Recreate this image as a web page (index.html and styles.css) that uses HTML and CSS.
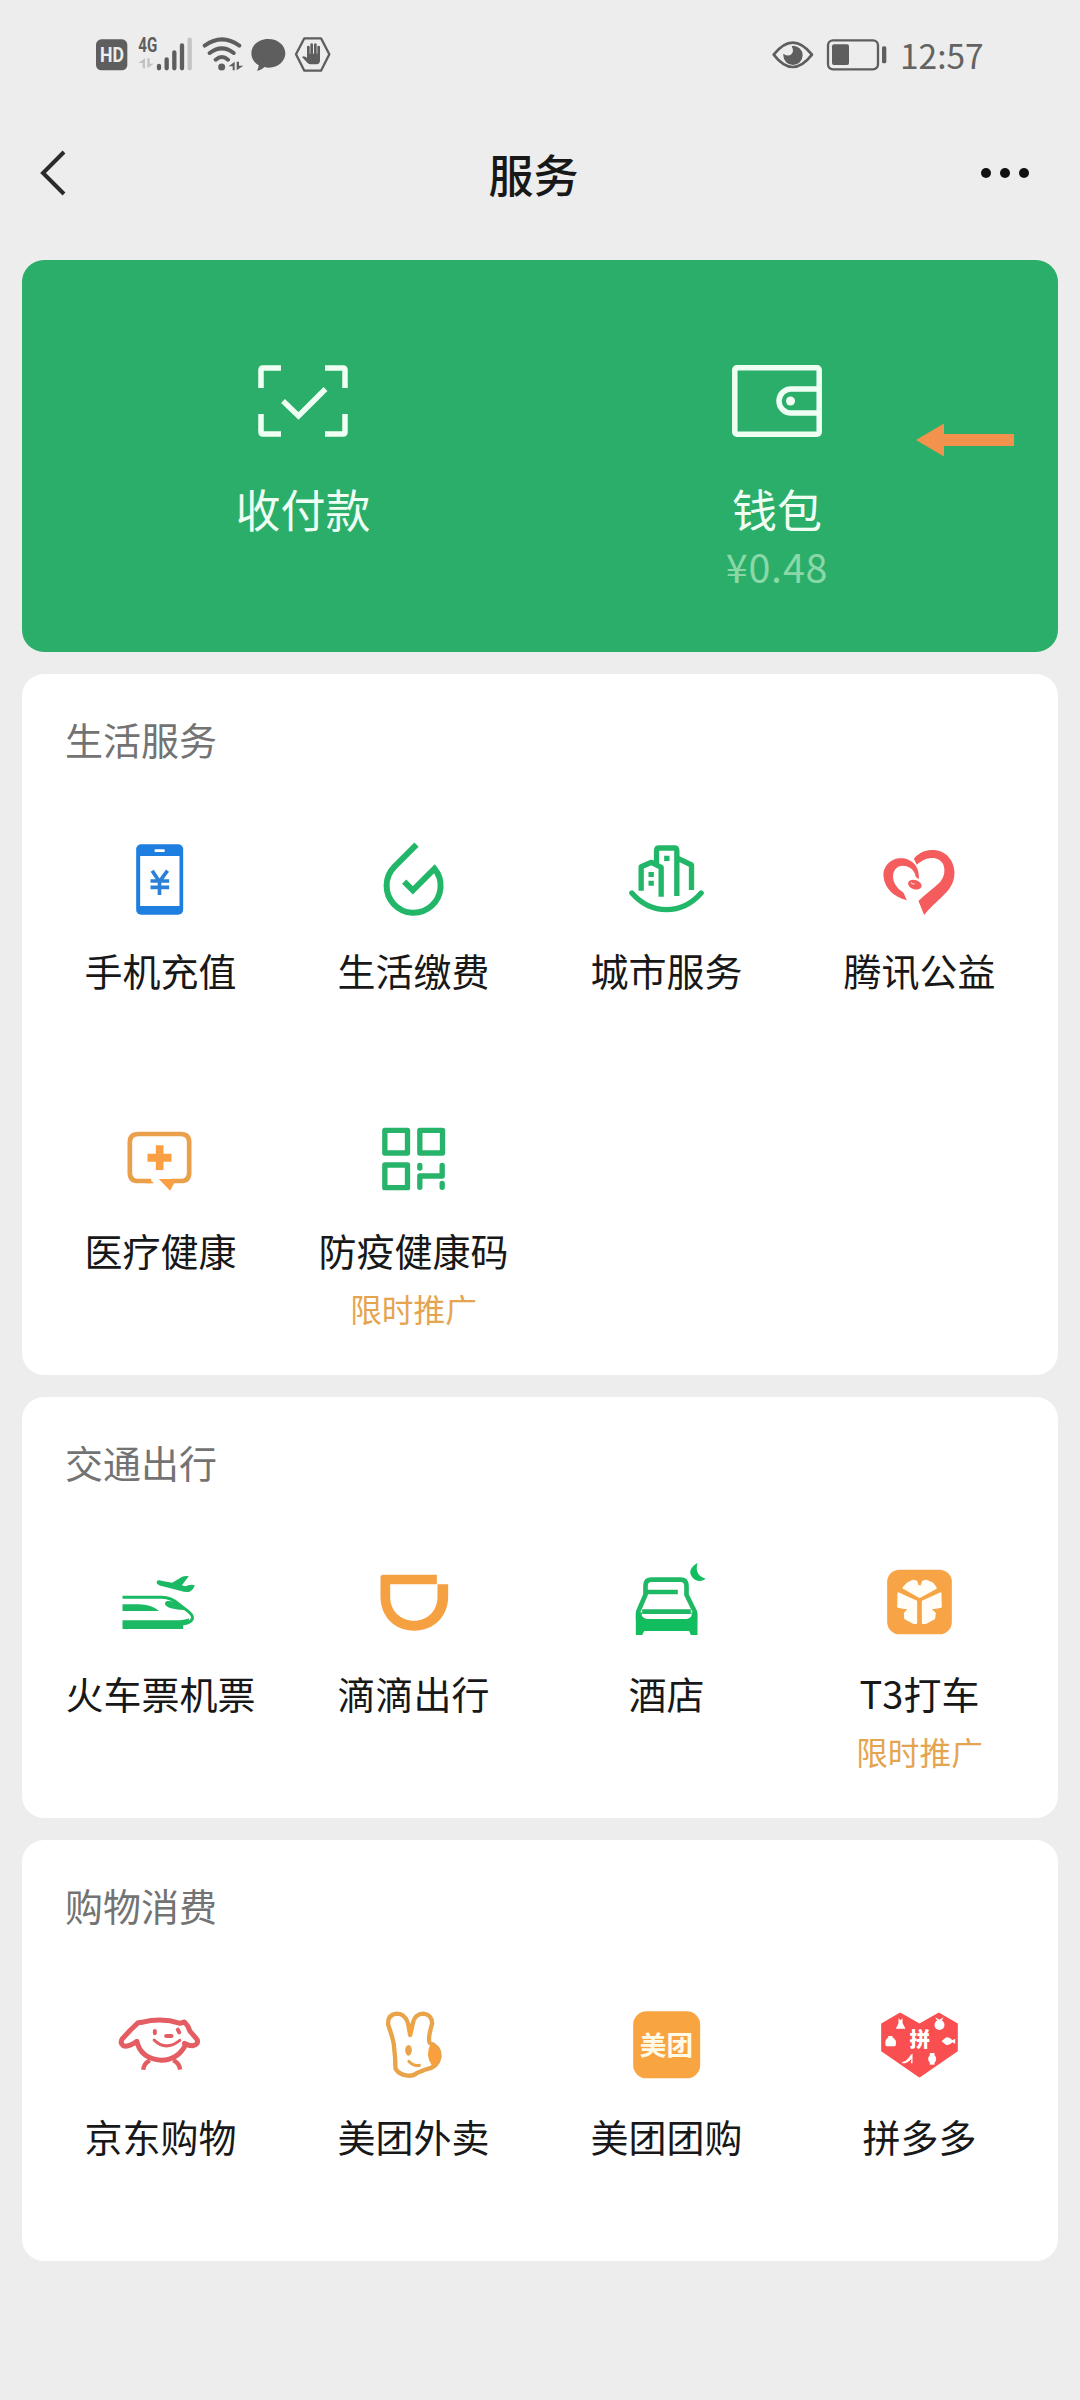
FILE: index.html
```html
<!DOCTYPE html>
<html lang="zh-CN">
<head>
<meta charset="utf-8">
<title>服务</title>
<link rel="stylesheet" href="styles.css">
</head>
<body>
<header class="status">
  <div class="status-group">
    <svg width="34.67" height="35" viewBox="44 50 104 105">
      <rect x="47" y="57" width="94" height="93" rx="16" fill="#5e5e5e"/>
      <text class="hd" x="95" y="126" text-anchor="middle" textLength="72" lengthAdjust="spacingAndGlyphs">HD</text>
    </svg>
    <svg width="59.33" height="51" viewBox="166 26 178 153">
      <text class="net" x="176" y="95" textLength="57" lengthAdjust="spacingAndGlyphs">4G</text>
      <path d="M196 114v30h-7v-16h-13zM203 114v30l19-14h-12v-16z" fill="#c2c2c2"/>
      <g stroke="#5e5e5e" stroke-width="13" stroke-linecap="round"><path d="M238 137v7M261 117v27M284 96v48M307 75v69"/><path d="M330 58v86" stroke="#c4c4c4"/></g>
    </svg>
    <svg width="44" height="35" viewBox="362 50 132 105">
      <g fill="none" stroke="#5e5e5e" stroke-width="12" stroke-linecap="round"><path d="M373 76Q425 38 477 76M388 98Q425 70 460 98M406 118Q425 102 443 118"/></g>
      <circle cx="424" cy="140" r="10.500" fill="#5e5e5e"/>
      <path d="M463 124v26h-6v-12h-12zM469 124v26l20-14h-13v-12z" fill="#5e5e5e"/>
    </svg>
    <svg width="36" height="35" viewBox="512 50 108 105">
      <path d="M564 56c29 0 51 19 51 43s-22 43-49 43c-5 0-10-1-14-2-6 6-13 11-22 11 3-5 5-10 5-16-14-8-22-21-22-36 0-24 22-43 51-43z" fill="#5e5e5e"/>
    </svg>
    <svg width="38" height="35" viewBox="638 50 114 105">
      <path d="M672 54h50l25 48-25 49h-50l-25-49z" fill="none" stroke="#5e5e5e" stroke-width="7" stroke-linejoin="round"/>
      <path d="M684 118V80M694 116V73M705 116V73M715 118V80" stroke="#5e5e5e" stroke-width="8" stroke-linecap="round"/>
      <path d="M680 100h39v20q0 12-11 12h-16q-7 0-11-5l-16-17q5-6 15 2z" fill="#5e5e5e"/>
    </svg>
  </div>
  <div class="status-group">
    <svg width="43.33" height="35" viewBox="65 50 130 105">
      <path d="M73 103Q130 31 188 103Q130 177 73 103z" fill="none" stroke="#5e5e5e" stroke-width="8" stroke-linejoin="round"/>
      <path d="M131 76a29 29 0 1 1-29 29v-5q14 10 24 2 9-9 1-24z" fill="#5e5e5e"/>
    </svg>
    <svg width="66.33" height="35" viewBox="213 50 199 105">
      <rect x="234" y="60" width="150" height="87" rx="15" fill="none" stroke="#5e5e5e" stroke-width="7"/>
      <rect x="246" y="72" width="51" height="62" rx="6" fill="#5e5e5e"/><rect x="396" y="78" width="13" height="51" rx="5" fill="#5e5e5e"/>
    </svg>
    <span class="clock">12:57</span>
  </div>
</header>

<nav class="nav">
  <svg width="48" height="60" viewBox="0 0 48 60"><path d="M34 9L13 30L34 51" fill="none" stroke="#2b2b2b" stroke-width="4"/></svg>
  <h1 class="nav-title">服务</h1>
  <svg width="60" height="20" viewBox="0 0 60 20" fill="#111"><circle cx="11" cy="10" r="5"/><circle cx="30" cy="10" r="5"/><circle cx="49" cy="10" r="5"/></svg>
</nav>

<main class="cards">
  <section class="pay">
    <div class="pay-item">
      <svg width="90" height="72" viewBox="0 0 90 72" fill="none" stroke="#effff4" stroke-width="5.500">
        <path d="M3 23V5q0-2 2-2H23M67 3H85q2 0 2 2V23M87 49V67q0 2-2 2H67M23 69H5q-2 0-2-2V49M25 36L40.500 51L67.500 24"/>
      </svg>
      <span class="pay-label">收付款</span>
    </div>
    <div class="pay-item">
      <svg width="90" height="72" viewBox="0 0 90 72" fill="none" stroke="#effff4" stroke-width="5.500">
        <rect x="2.800" y="2.800" width="84.400" height="66.400" rx="2"/><path d="M87 24H59a12 12 0 0 0 0 24H87"/><circle cx="58.500" cy="36" r="4.500" fill="#effff4" stroke="none"/>
      </svg>
      <span class="pay-label">钱包</span>
      <span class="pay-sub">¥0.48</span>
    </div>
    <svg class="arrow" width="98" height="34" viewBox="0 0 98 34"><path d="M0 17L28 0.500V11H98V23H28V33.500z" fill="#f3924d"/></svg>
  </section>

  <section class="card">
    <h2 class="card-title">生活服务</h2>
    <div class="grid">
      <div class="item">
        <svg class="icon" viewBox="157.500 396 288 288">
          <rect x="230" y="433" width="141" height="211" rx="15" fill="#1e7fe0"/><path d="M242 468H360V618H242z" fill="#fff"/><rect x="285" y="448" width="31" height="8" rx="3" fill="#fff"/>
          <path d="M278 512L300 545L324 512M273 543H329M273 562H329M300 543V585" fill="none" stroke="#2a80d6" stroke-width="11"/>
        </svg>
        <span class="label">手机充值</span>
      </div>
      <div class="item">
        <svg class="icon" viewBox="916.500 396 288 288"><path d="M1071 434L1005 500A81 81 0 1 0 1125 506L1060 571L1034 545" fill="none" stroke="#22b668" stroke-width="18"/></svg>
        <span class="label">生活缴费</span>
      </div>
      <div class="item">
        <svg class="icon" viewBox="115.500 36 288 288">
          <g fill="none" stroke="#22b668" stroke-width="16"><path d="M157 219Q201 269 261 269T365 219" stroke-linecap="round"/><path d="M185 212V140L216 127L245 142V230M231 132V92Q231 84 239 84H284Q292 84 292 92V228M297 116L336 135V210" stroke-linejoin="round"/></g>
          <path d="M254 107h16v16h-16zM207 156h16v15h-16zM207 182h16v15h-16z" fill="#22b668"/>
        </svg>
        <span class="label">城市服务</span>
      </div>
      <div class="item">
        <svg class="icon" viewBox="874.500 36 288 288">
          <g fill="#f55c5e"><path d="M1003 116C1025 90 1052 88 1070 91C1105 97 1124 126 1125 157C1125 194 1106 213 1084 234C1066 251 1050 264 1034 285L1017 243C1034 225 1060 207 1079 189C1094 174 1099 153 1091 133C1081 111 1046 104 1012 134z"/>
          <path d="M1018 178C1022 135 991 111 957 115C929 119 909 143 912 170C917 207 942 229 982 241L972 218C951 205 938 185 941 163C945 142 962 133 981 139C996 144 1006 154 1009 171z"/><ellipse cx="1006" cy="194" rx="21" ry="14" transform="rotate(18 1006 194)"/></g>
          <path d="M994 188q5 5 11 4" stroke="#fff" stroke-width="3" fill="none"/>
        </svg>
        <span class="label">腾讯公益</span>
      </div>
      <div class="item">
        <svg class="icon" viewBox="157.500 36 288 288">
          <path d="M275 243H236Q211 243 211 218V127Q211 102 236 102H364Q389 102 389 127V218Q389 243 364 243H335" fill="none" stroke="#eaa04a" stroke-width="14"/><path d="M268 236L284 250H260zM298 237H350L332 272zM289 136h23v25h24v24h-24v25h-23v-25h-25v-24h25z" fill="#fa9f43"/>
        </svg>
        <span class="label">医疗健康</span>
      </div>
      <div class="item">
        <svg class="icon" viewBox="916.500 36 288 288">
          <g fill="none" stroke="#28b36b" stroke-width="16" stroke-linejoin="round"><path d="M976 91h68v68h-68zM1081 91h68v68h-68zM976 195h68v68h-68z"/><path d="M1081 262V228H1148V196M1081 196V204M1148 250V262" stroke-linecap="round"/></g>
        </svg>
        <span class="label">防疫健康码</span><span class="promo">限时推广</span>
      </div>
    </div>
  </section>

  <section class="card">
    <h2 class="card-title">交通出行</h2>
    <div class="grid">
      <div class="item">
        <svg class="icon" viewBox="157.500 375 288 288" fill="#1bb964">
          <path d="M189 571H347Q374 571 389 565Q388 583 371 585V597H189zM189 523H238Q276 524 299 543H189zM322 513Q344 511 364 526L377 540Q340 539 326 532Q308 521 322 513z"/>
          <path d="M189 502H306Q337 503 360 524L386 544Q412 565 386 578Q375 583 352 583" fill="none" stroke="#1bb964" stroke-width="9"/>
          <path d="M293 452Q298 449 309 453L338 458L368 440Q378 436 388 439L367 466Q378 471 386 466Q395 462 406 466Q400 482 390 485Q379 488 362 482L303 467Q287 461 293 452z"/>
        </svg>
        <span class="label">火车票机票</span>
      </div>
      <div class="item">
        <svg class="icon" viewBox="916.500 375 288 288"><path fill-rule="evenodd" d="M971 434H1132V463H1166V500C1166 560 1121 602 1064 602C1007 602 963 560 963 500V442Q963 434 971 434zM992 463V500C992 543 1024 572 1064 572C1103 572 1134 543 1134 500V463z" fill="#f5a041"/></svg>
        <span class="label">滴滴出行</span>
      </div>
      <div class="item">
        <svg class="icon" viewBox="115.500 45 288 288">
          <path d="M176 240V215L198 164V137Q198 119 216 119H303Q321 119 321 137V164L346 215V240M203 156H295M188 215H334" fill="none" stroke="#1fb966" stroke-width="14"/>
          <path d="M169 220L188 217Q182 232 202 237H322Q341 232 335 217L354 220V285H334L329 273H194L188 285H169zM354 69Q344 106 379 116Q360 129 343 117Q317 91 354 69z" fill="#12bd60"/>
        </svg>
        <span class="label">酒店</span>
      </div>
      <div class="item">
        <svg class="icon" viewBox="874.500 45 288 288">
          <rect x="923" y="89" width="194" height="194" rx="37" fill="#f6a445"/>
          <g fill="#fffdf5" stroke="#fffdf5" stroke-width="6" stroke-linejoin="round">
            <path d="M1020 171L972 144L984 130L1001 122L1011 125L1015 139H1026L1030 125L1040 122L1059 130L1069 144z"/>
            <path d="M1010 184L957 160L956 200L975 204L981 202L986 209L976 220L977 235L1002 249H1010zM1030 184L1083 160L1084 200L1065 204L1059 202L1054 209L1066 220L1064 235L1038 249H1030z"/>
          </g>
        </svg>
        <span class="label">T3打车</span><span class="promo">限时推广</span>
      </div>
    </div>
  </section>

  <section class="card">
    <h2 class="card-title">购物消费</h2>
    <div class="grid">
      <div class="item">
        <svg class="icon" viewBox="157.500 384 288 288" fill="none" stroke="#e35d63" stroke-linecap="round" stroke-linejoin="round">
          <path d="M247 457Q306 442 362 460L375 456Q386 466 391 483L413 509Q418 522 401 527Q386 527 375 520M247 457L236 458L213 480L188 507Q181 519 191 527Q206 533 232 514Q243 566 306 571Q356 569 379 523" stroke-width="15"/>
          <path d="M284 510Q318 545 361 511" stroke-width="9"/><path d="M286 483V490M355 479L359 487M320 498H336" stroke-width="12"/><path d="M271 571Q253 580 251 599M341 571Q359 579 362 599" stroke-width="13" stroke-linecap="butt"/>
        </svg>
        <span class="label">京东购物</span>
      </div>
      <div class="item">
        <svg class="icon" viewBox="916.500 384 288 288" fill="none" stroke="#e9a449" stroke-linecap="round" stroke-linejoin="round">
          <path d="M1004 535Q1004 515 986 464Q983 434 1012 431Q1038 431 1046 462L1052 495L1061 456Q1067 432 1092 431Q1117 434 1118 461Q1105 502 1110 518Q1142 530 1140 561Q1134 592 1100 598L1072 609Q1060 619 1044 617Q1018 614 1008 596Q1008 565 1004 535z" stroke-width="13"/>
          <path d="M1114 526Q1140 534 1138 562Q1134 581 1119 584Q1100 556 1114 526zM1046 470H1060L1053 497z" fill="#f99f3e" stroke="#f99f3e" stroke-width="5"/><ellipse cx="1047" cy="541" rx="10" ry="16" fill="#e9a449" stroke="none"/><path d="M1048 574Q1062 590 1080 586" stroke-width="9"/>
        </svg>
        <span class="label">美团外卖</span>
      </div>
      <div class="item">
        <svg class="icon" viewBox="115.500 54 288 288"><rect x="161" y="94" width="201" height="201" rx="40" fill="#f8a541"/><text class="mt-logo" x="261" y="226" text-anchor="middle">美团</text></svg>
        <span class="label">美团团购</span>
      </div>
      <div class="item">
        <svg class="icon" viewBox="874.500 54 288 288">
          <path d="M962 101L1020 134L1078 101L1132 132V212L1020 289L908 212V132z" fill="#f94f51" stroke="#f94f51" stroke-width="6" stroke-linejoin="round"/>
          <text class="pdd-logo" x="1021" y="200" text-anchor="middle">拼</text>
          <g fill="#fff"><path d="M957 115L963 121L969 115V129L978 146H949L957 130z"/><circle cx="1080" cy="135" r="15"/><path d="M1067 112L1080 119L1092 112L1086 124H1074z"/><path d="M918 182Q922 171 933 170Q944 172 949 182Q951 198 945 199H921Q916 197 918 182zM926 168h13v7h-13z"/><path d="M1086 184L1100 172Q1113 172 1118 181L1127 176V191L1118 187Q1112 197 1100 195zM968 246Q984 242 994 224L999 221V250H994L996 236Q984 251 968 250z"/><circle cx="1058" cy="237" r="12"/><path d="M1051 219h14v35h-14z"/></g>
        </svg>
        <span class="label">拼多多</span>
      </div>
    </div>
  </section>
</main>
</body>
</html>
```
FILE: styles.css
```css
* {
  box-sizing: border-box;
  margin: 0;
  padding: 0;
}

body {
  width: 1080px;
  min-height: 2400px;
  background: #ededed;
  color: #181818;
  font-family: "Noto Sans CJK SC", sans-serif;
}

svg {
  display: block;
  flex: none;
}

.status {
  height: 108px;
  padding: 0 95px 0 94.7px;
  display: flex;
  justify-content: space-between;
  align-items: center;
}

.status-group {
  display: flex;
  align-items: center;
  gap: 6px;
}

.clock {
  margin-left: 7px;
  padding-top: 2px;
  width: 85px;
  font-size: 33.500px;
  line-height: 36px;
  color: #636363;
}

.hd {
  font: 700 58px Roboto, sans-serif;
  fill: #ededed;
}

.net {
  font: 700 60px Roboto, sans-serif;
  fill: #5e5e5e;
}

.nav {
  height: 130px;
  padding: 0 45px 0 30px;
  display: flex;
  justify-content: space-between;
  align-items: center;
}

.nav-title {
  margin-left: 14px;
  padding-top: 1px;
  font-size: 45px;
  font-weight: 500;
  line-height: 60px;
}

.cards {
  padding: 22px;
  display: flex;
  flex-direction: column;
  gap: 22px;
}

.pay {
  position: relative;
  height: 392px;
  padding: 105px 44px 0;
  display: grid;
  grid-template-columns: 1fr 1fr;
  border-radius: 22px;
  background: #2bae69;
}

.pay-item {
  display: flex;
  flex-direction: column;
  align-items: center;
}

.pay-label {
  margin-top: 42px;
  font-size: 45px;
  line-height: 60px;
  color: #effff4;
}

.pay-sub {
  font-size: 39.500px;
  line-height: 54px;
  letter-spacing: 0.8px;
  color: #8ad8a8;
}

.arrow {
  position: absolute;
  left: 893.500px;
  top: 163px;
}

.card {
  padding: 0 12px;
  border-radius: 22px;
  background: #fff;
}

.card-title {
  height: 141px;
  padding: 36.500px 0 0 31px;
  font-size: 38px;
  font-weight: 400;
  line-height: 56px;
  color: #737373;
}

.grid {
  display: grid;
  grid-template-columns: repeat(4, 1fr);
  grid-auto-rows: 280px;
}

.item {
  padding-top: 17px;
  display: flex;
  flex-direction: column;
  align-items: center;
  white-space: nowrap;
}

.icon {
  width: 96px;
  height: 96px;
  margin-right: 1.500px;
}

.label {
  margin-top: 14px;
  font-size: 38px;
  line-height: 56px;
}

.promo {
  margin-top: 7px;
  font-size: 31.700px;
  line-height: 46px;
  color: #e5a550;
}

.mt-logo {
  font: 700 80px "Noto Sans CJK SC", sans-serif;
  fill: #fffbe8;
}

.pdd-logo {
  font: 900 62px "Noto Sans CJK SC", sans-serif;
  fill: #fff;
}
```
